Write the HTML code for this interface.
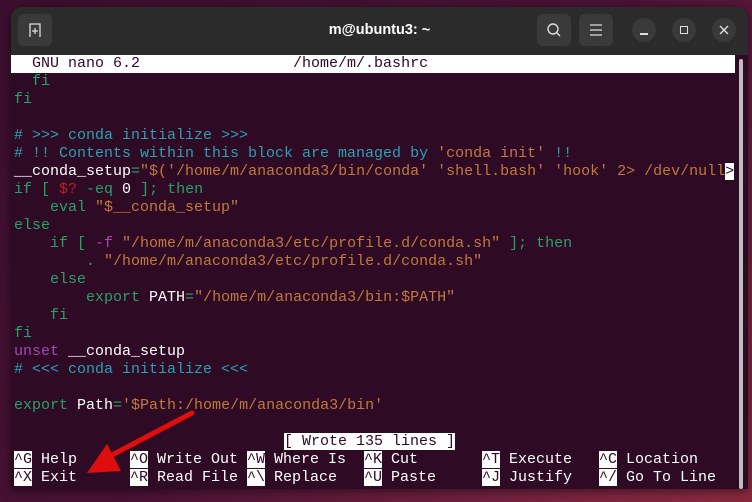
<!DOCTYPE html>
<html><head><meta charset="utf-8"><style>
*{margin:0;padding:0;box-sizing:border-box}
body{width:752px;height:502px;overflow:hidden;position:relative;background:linear-gradient(135deg,#3a0f2e 0%,#4a1235 50%,#7a2440 85%,#8a2a3e 100%);font-family:"Liberation Sans",sans-serif}
.win{position:absolute;left:11px;top:7px;width:737px;height:482px;border-radius:11px 11px 0 0;background:#2f0a24;overflow:hidden;box-shadow:0 2px 10px rgba(0,0,0,.5)}
.tb{position:absolute;left:0;top:0;width:100%;height:48px;background:#2b2b2b}
.title{position:absolute;left:0;right:0;top:15px;text-align:center;color:#fff;font-weight:bold;font-size:14.5px}
.btn{position:absolute;top:7px;width:34px;height:32px;border-radius:6px;background:#3a3a3a}
.circ{position:absolute;top:11px;width:24px;height:24px;border-radius:50%;background:#3a3a3a}
.term{position:absolute;left:3px;top:48px;width:730px;height:440px;font-family:"Liberation Mono",monospace;font-size:15px;line-height:18px;color:#fff;white-space:pre}
.row{position:absolute;left:0;height:18px;white-space:pre}
.g{color:#26a269}.c{color:#2aa1b3}.s{color:#c07a3c}.r{color:#c01c28}.p{color:#a347ba}.w{color:#fff}
.inv{background:#fff;color:#2f0a24}
.sb{position:absolute;left:728px;top:52px;width:4px;height:430px;border-radius:2px;background:#bdbdbd}
</style></head><body>
<div class="win">
 <div class="tb">
  <div class="btn" style="left:7px"></div>
  <svg style="position:absolute;left:16px;top:15px" width="16" height="16" viewBox="0 0 16 16" fill="none" stroke="#ddd" stroke-width="1.3"><path d="M3 15V2h10v13M8 6v6M5 9h6"/></svg>
  <div class="title">m@ubuntu3: ~</div>
  <div class="btn" style="left:526px"></div>
  <svg style="position:absolute;left:535px;top:15px" width="16" height="16" viewBox="0 0 16 16" fill="none" stroke="#ddd" stroke-width="1.4"><circle cx="7" cy="7" r="5"/><path d="M10.5 10.5L14 14"/></svg>
  <div class="btn" style="left:568px"></div>
  <svg style="position:absolute;left:578px;top:16px" width="14" height="14" viewBox="0 0 14 14" stroke="#ddd" stroke-width="1.3"><path d="M1 2h12M1 7h12M1 12h12"/></svg>
  <div class="circ" style="left:621px"></div>
  <div style="position:absolute;left:629px;top:26px;width:8px;height:1.5px;background:#ddd"></div>
  <div class="circ" style="left:661px"></div>
  <div style="position:absolute;left:669px;top:19px;width:8px;height:8px;border:1.4px solid #ddd"></div>
  <div class="circ" style="left:701px"></div>
  <svg style="position:absolute;left:708px;top:18px" width="10" height="10" viewBox="0 0 10 10" stroke="#ddd" stroke-width="1.4"><path d="M1 1l8 8M9 1l-8 8"/></svg>
 </div>
 <div style="position:absolute;left:0;top:48px;width:724px;height:18px;background:#fff"></div>
 <div class="term">
<div class="row inv" style="top:0;background:transparent">  GNU nano 6.2                 /home/m/.bashrc</div>
<div class="row g" style="top:18px">  fi</div>
<div class="row g" style="top:36px">fi</div>
<div class="row c" style="top:72px"># &gt;&gt;&gt; conda initialize &gt;&gt;&gt;</div>
<div class="row c" style="top:90px"># !! Contents within this block are managed by <span class="s">'conda init'</span> !!</div>
<div class="row" style="top:108px">__conda_setup<span class="g">=</span><span class="s">"$('/home/m/anaconda3/bin/conda' 'shell.bash' 'hook' 2&gt; /dev/null</span><span class="inv">&gt;</span></div>
<div class="row g" style="top:126px">if [ <span class="r">$?</span> -eq <span class="w">0</span> ]; then</div>
<div class="row g" style="top:144px">    eval <span class="s">"$__conda_setup"</span></div>
<div class="row g" style="top:162px">else</div>
<div class="row g" style="top:180px">    if [ <span class="p">-f</span> <span class="s">"/home/m/anaconda3/etc/profile.d/conda.sh"</span> ]; then</div>
<div class="row s" style="top:198px">        <span class="g">.</span> "/home/m/anaconda3/etc/profile.d/conda.sh"</div>
<div class="row g" style="top:216px">    else</div>
<div class="row g" style="top:234px">        export <span class="w">PATH</span>=<span class="s">"/home/m/anaconda3/bin:$PATH"</span></div>
<div class="row g" style="top:252px">    fi</div>
<div class="row g" style="top:270px">fi</div>
<div class="row p" style="top:288px">unset <span class="w">__conda_setup</span></div>
<div class="row c" style="top:306px"># &lt;&lt;&lt; conda initialize &lt;&lt;&lt;</div>
<div class="row g" style="top:342px">export <span class="w">Path</span>=<span class="s">'$Path:/home/m/anaconda3/bin'</span></div>
<div class="row" style="top:378px;left:270px"><span class="inv">[ Wrote 135 lines ]</span></div>
<div class="row" style="top:396px;left:0"><span class="inv">^G</span> Help</div>
<div class="row" style="top:414px;left:0"><span class="inv">^X</span> Exit</div>
<div class="row" style="top:396px;left:116px"><span class="inv">^O</span> Write Out</div>
<div class="row" style="top:414px;left:116px"><span class="inv">^R</span> Read File</div>
<div class="row" style="top:396px;left:233px"><span class="inv">^W</span> Where Is</div>
<div class="row" style="top:414px;left:233px"><span class="inv">^\</span> Replace</div>
<div class="row" style="top:396px;left:350px"><span class="inv">^K</span> Cut</div>
<div class="row" style="top:414px;left:350px"><span class="inv">^U</span> Paste</div>
<div class="row" style="top:396px;left:468px"><span class="inv">^T</span> Execute</div>
<div class="row" style="top:414px;left:468px"><span class="inv">^J</span> Justify</div>
<div class="row" style="top:396px;left:585px"><span class="inv">^C</span> Location</div>
<div class="row" style="top:414px;left:585px"><span class="inv">^/</span> Go To Line</div>
 </div>
 <div class="sb"></div>
</div>
<svg style="position:absolute;left:0;top:0" width="752" height="502">
 <path d="M192 413 L112 455" stroke="#e00d0d" stroke-width="5" stroke-linecap="round"/>
 <path d="M87 473 L107 444 L121 471 Z" fill="#e00d0d"/>
</svg>
</body></html>
